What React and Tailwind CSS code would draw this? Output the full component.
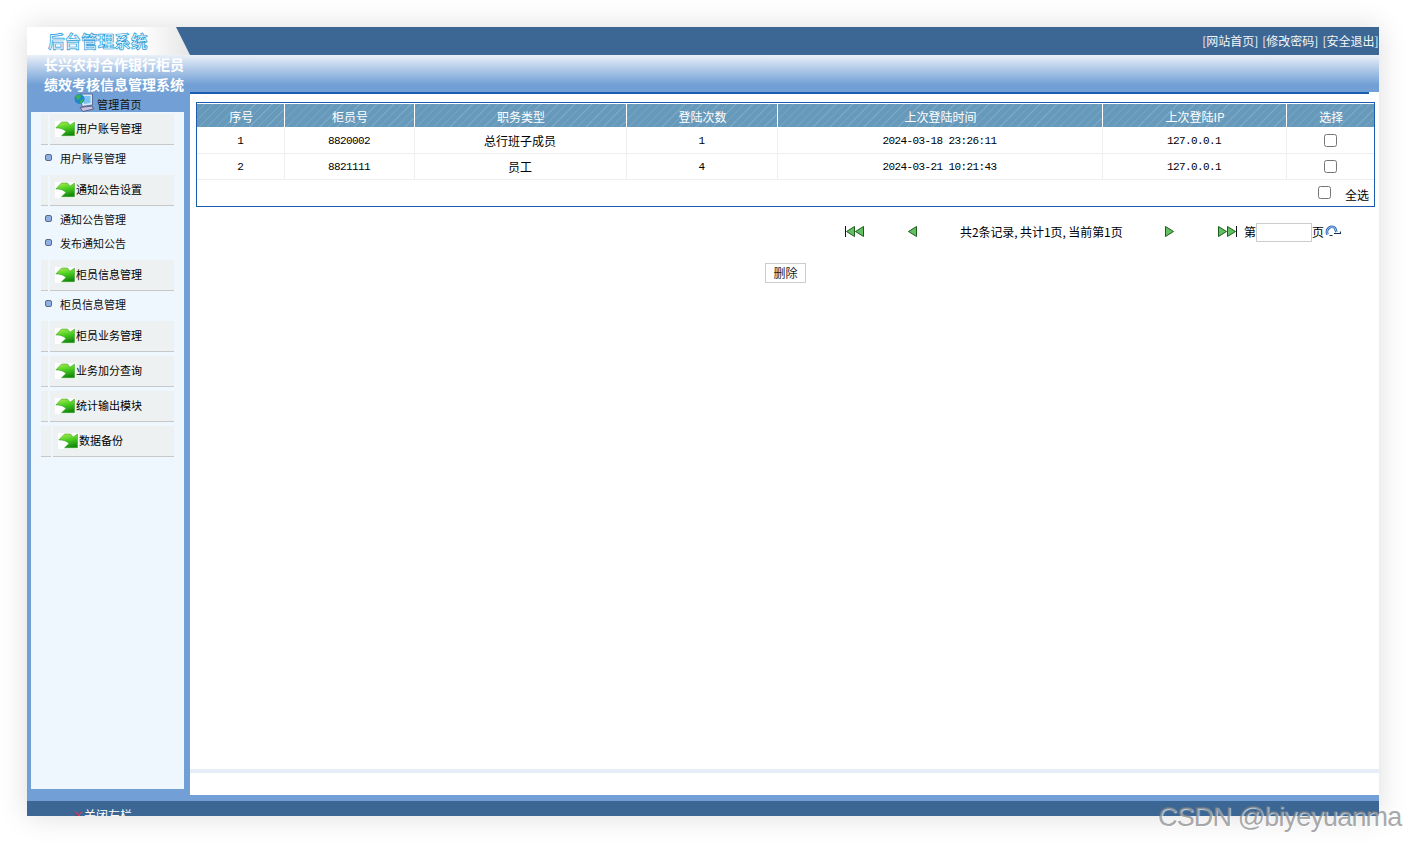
import { useState } from 'react';

// left menu, in page order
const menu = [
  { title: '用户账号管理', items: ['用户账号管理'] },
  { title: '通知公告设置', items: ['通知公告管理', '发布通知公告'] },
  { title: '柜员信息管理', items: ['柜员信息管理'] },
  { title: '柜员业务管理', items: [] },
  { title: '业务加分查询', items: [] },
  { title: '统计输出模块', items: [] },
  { title: '数据备份', items: [], wide: true },
];

const rows = [
  { id: 1, no: '8820002', type: '总行班子成员', times: '1', last: '2024-03-18 23:26:11', ip: '127.0.0.1' },
  { id: 2, no: '8821111', type: '员工', times: '4', last: '2024-03-21 10:21:43', ip: '127.0.0.1' },
];

const columns = [
  { name: '序号', width: 87 },
  { name: '柜员号', width: 130 },
  { name: '职务类型', width: 212 },
  { name: '登陆次数', width: 151 },
  { name: '上次登陆时间', width: 325 },
  { name: '上次登陆IP', width: 184 },
  { name: '选择', width: 88 },
];

function GreenArrow() {
  return (
    <svg width="21" height="16" viewBox="0 0 21 16" className="bg-white shrink-0">
      <defs>
        <linearGradient id="arrowFill" x1="0.2" y1="0" x2="0.5" y2="1">
          <stop offset="0" stopColor="#a6ec4e" />
          <stop offset="0.5" stopColor="#48cc20" />
          <stop offset="1" stopColor="#14880f" />
        </linearGradient>
      </defs>
      <path d="M0.8 7 L6.5 1 H12.5 L15 4.2 L19.5 1 V14.8 H6.5 L11 10.5 Q7 6.5 0.8 7 Z" fill="url(#arrowFill)" stroke="#2c9a18" strokeWidth="0.5" />
    </svg>
  );
}

function Triangle({ left, x = 0 }) {
  const points = left ? `${x + 8.5},0.5 ${x + 8.5},10.5 ${x + 0.5},5.5` : `${x + 0.5},0.5 ${x + 0.5},10.5 ${x + 8.5},5.5`;
  return <polygon points={points} fill="#62bf62" stroke="#1d5c1d" strokeWidth="1" />;
}

function PagerIcon({ type }) {
  if (type === 'first') {
    return (
      <svg width="19" height="11" viewBox="0 0 19 11" className="block shrink-0">
        <path d="M0.5 0 V11" stroke="#111" />
        <Triangle left x={1} />
        <Triangle left x={10} />
      </svg>
    );
  }
  if (type === 'last') {
    return (
      <svg width="19" height="11" viewBox="0 0 19 11" className="block shrink-0">
        <Triangle x={0} />
        <Triangle x={9} />
        <path d="M18.5 0 V11" stroke="#111" />
      </svg>
    );
  }
  return (
    <svg width="9" height="11" viewBox="0 0 9 11" className="block shrink-0">
      <Triangle left={type === 'prev'} />
    </svg>
  );
}

function ComputerIcon() {
  return (
    <svg width="20" height="19" viewBox="0 0 20 19" className="shrink-0">
      <path d="M6 1 H18.5 L18.5 12 L8 13.5 Z" fill="#d5e9fb" stroke="#5a6f9a" />
      <path d="M9 3 H16.5 L16.5 10 L10 11 Z" fill="#7cc0f2" />
      <path d="M6 14.5 L18 13 L19.5 16 L9 18.5 Z" fill="#c6c2dd" stroke="#4f4c7a" strokeWidth="0.8" />
      <circle cx="5.5" cy="6" r="5" fill="#1f86cc" />
      <path d="M2 3 Q5 1 7 2.5 L6 6 L3 7 Z M6 8 L9.5 6 L8 10 L6 10.5 Z" fill="#37b54a" />
    </svg>
  );
}

function MenuBlock({ title, items, wide }) {
  return (
    <div className="mt-[4px] first:mt-[2px]">
      <div className="ml-[10px] w-[133px] h-[31px] flex gap-[2px]">
        <div className={`${wide ? 'w-[10px]' : 'w-[7px]'} bg-[#eef1f1] border-b border-[#c8c8c8]`} />
        <div className="flex-1 bg-[#eef1f1] border-b border-[#c8c8c8] flex items-center pl-[5px] text-[11px] text-black">
          <GreenArrow />
          <span className="-mt-[1px]">{title}</span>
        </div>
      </div>
      {items.length > 0 && (
        <ul className="pt-[2px]">
          {items.map((item) => (
            <li key={item} className="h-[24px] flex items-center pl-[14px] text-[11px] text-[#111]">
              <span className="w-[7px] h-[7px] rounded-[2px] bg-[#8fb0e4] border border-[#5a6b85] mr-[8px] -mt-[4px]" />
              <span className="-mt-[1px]">{item}</span>
            </li>
          ))}
        </ul>
      )}
    </div>
  );
}

export default function App() {
  const [page, setPage] = useState('');
  const mono = "border-r border-[#eeeeee] pt-[2px] font-['Liberation_Mono',monospace] text-[11px] tracking-[-0.6px]";

  return (
    <div className="relative p-[27px] bg-white font-['Noto_Sans_CJK_SC',sans-serif] overflow-hidden">
      <div className="w-[1352px] h-[789px] flex flex-col shadow-[0_0_28px_rgba(0,0,0,0.14)] bg-white">
        {/* top bar */}
        <div className="h-[28px] bg-[#3c6794] flex shrink-0">
          <div className="w-[163px] bg-gradient-to-r from-white from-70% to-[#e6e6e6] [clip-path:polygon(0_0,149px_0,163px_100%,0_100%)] pl-[21px] flex items-center">
            <span className="text-[16.6px] font-bold leading-none text-[#e4f6ff] [-webkit-text-stroke:0.7px_#1f9ad8]">后台管理系统</span>
          </div>
          <div className="flex-1 flex items-center justify-end pr-[0.5px] text-[12px] text-[#f2f6fa] gap-[4px]">
            <span>[网站首页]</span>
            <span>[修改密码]</span>
            <span>[安全退出]</span>
          </div>
        </div>

        {/* title band */}
        <div className="h-[37px] shrink-0 bg-gradient-to-b from-[#eaf0f7] to-[#72a0d6] to-80% pl-[17px] text-white font-bold text-[14px] leading-[20px]">
          <div className="-mt-[1px]">长兴农村合作银行柜员</div>
          <div>绩效考核信息管理系统</div>
        </div>

        <div className="flex-1 flex min-h-0">
          {/* sidebar */}
          <div className="w-[163px] shrink-0 bg-[#72a0d6] pl-[4px] pr-[6px] pb-[6px] flex flex-col">
            <div className="h-[20px] shrink-0 flex items-center pl-[43px] text-[11px] text-[#111]">
              <ComputerIcon />
              <span className="ml-[3px] mt-[5px] tracking-[0.2px]">管理首页</span>
            </div>
            <div className="flex-1 bg-[#eef6fe]">
              {menu.map((block) => (
                <MenuBlock key={block.title} {...block} />
              ))}
            </div>
          </div>

          {/* main area */}
          <div className="flex-1 flex flex-col bg-white">
            <div className="h-[2px] w-[1179px] bg-[#1a5cb0] shrink-0" />
            <div className="ml-[6px] mt-[8px] w-[1179px] border border-[#1a5cb0] pt-[1px]">
              <table className="table-fixed w-[1177px] border-collapse text-[12px] text-black">
                <colgroup>
                  {columns.map((col) => (
                    <col key={col.name} style={{ width: col.width }} />
                  ))}
                </colgroup>
                <thead>
                  <tr className="h-[23px]">
                    {columns.map((col) => (
                      <th
                        key={col.name}
                        className="font-normal text-white border-r border-b border-white last:border-r-0 bg-[#6699ba] bg-[repeating-linear-gradient(135deg,#6699ba_0,#6699ba_5px,#7ba8c5_5px,#7ba8c5_6px)] pt-[3px] pl-[2px]"
                      >
                        {col.name}
                      </th>
                    ))}
                  </tr>
                </thead>
                <tbody>
                  {rows.map((row) => (
                    <tr key={row.id} className="h-[26px] border-b border-[#eeeeee] text-center">
                      <td className={mono}>{row.id}</td>
                      <td className={mono}>{row.no}</td>
                      <td className="border-r border-[#eeeeee] pt-[2px]">{row.type}</td>
                      <td className={mono}>{row.times}</td>
                      <td className={mono}>{row.last}</td>
                      <td className={mono}>{row.ip}</td>
                      <td>
                        <input type="checkbox" className="align-middle -mt-[2px]" />
                      </td>
                    </tr>
                  ))}
                </tbody>
              </table>
              <div className="h-[26px] flex items-center justify-end pr-[5px] text-[12px] text-black">
                <input type="checkbox" className="-mt-[1px]" />
                <span className="ml-[14px] mt-[5px]">全选</span>
              </div>
            </div>

            {/* pager */}
            <div className="mt-[16px] h-[19px] flex items-center pl-[655px] text-[12px] text-black">
              <span className="-mt-[2px]"><PagerIcon type="first" /></span>
              <span className="ml-[44px] -mt-[2px]"><PagerIcon type="prev" /></span>
              <span className="ml-[43px] w-[162px] whitespace-nowrap tracking-[-0.08px]">共2条记录, 共计1页, 当前第1页</span>
              <span className="ml-[43px] -mt-[2px]"><PagerIcon type="next" /></span>
              <span className="ml-[44px] -mt-[2px]"><PagerIcon type="last" /></span>
              <span className="ml-[7px]">第</span>
              <input
                value={page}
                onChange={(e) => setPage(e.target.value)}
                className="w-[56px] h-[19px] border border-[#cccccc] outline-none"
              />
              <span>页</span>
              <svg width="16" height="12" viewBox="0 0 16 12" className="ml-[1px] -mt-[2px]">
                <path d="M2.5 9.5 C0 3.5 6.5 0 10 3 L11.5 7" fill="none" stroke="#2a62b0" strokeWidth="2.6" />
                <path d="M2.5 9.5 C0 3.5 6.5 0 10 3 L11.5 7" fill="none" stroke="#a9d0f5" strokeWidth="1" />
                <path d="M9 8.5 H15.5 V6.5 M4.5 10.5 H7.5" fill="none" stroke="#15305a" strokeWidth="1.1" />
              </svg>
            </div>

            <div className="mt-[21px] flex justify-center pl-[2px]">
              <button className="w-[41px] h-[20px] border border-[#cccccc] bg-white text-[12px] text-[#222]">删除</button>
            </div>

            <div className="mt-auto h-[4px] bg-[#e6eef8]" />
            <div className="h-[22px] shrink-0" />
          </div>
        </div>

        {/* footer */}
        <div className="h-[6px] bg-[#72a0d6] shrink-0" />
        <div className="h-[15px] bg-[#3c6794] shrink-0 overflow-hidden flex items-start pl-[45px] pt-[7px] text-[12px] leading-[14px] text-white">
          <span className="text-[#e8264f] w-[12px]">×</span>
          <span>关闭左栏</span>
        </div>
      </div>

      {/* watermark */}
      <div className="absolute left-[1158px] top-[799px] whitespace-nowrap font-['Liberation_Sans',sans-serif] text-[27px] tracking-[-0.85px] leading-[36px] text-[rgba(120,120,120,0.65)] [text-shadow:1px_1px_1px_rgba(255,255,255,0.7)]">
        CSDN @biyeyuanma
      </div>
    </div>
  );
}
